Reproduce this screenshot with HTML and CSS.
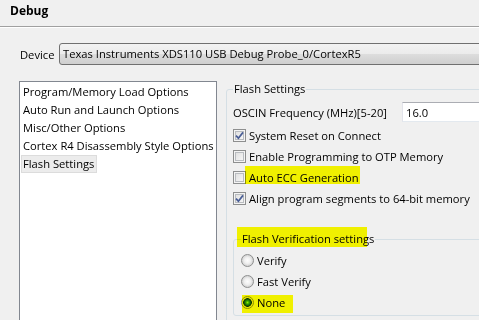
FILE: index.html
```html
<!DOCTYPE html>
<html lang="en">
<head>
    <meta charset="UTF-8">
    <title>Debug</title>
    <link rel="stylesheet" href="styles.css">
</head>
<body>

<div class="header">Debug</div>

<div class="device-row">
    <span class="device-label">Device</span>
    <div class="combo">Texas Instruments XDS110 USB Debug Probe_0/CortexR5</div>
</div>

<div class="main">
    <ul class="nav-list">
        <li><span>Program/Memory Load Options</span></li>
        <li><span>Auto Run and Launch Options</span></li>
        <li><span>Misc/Other Options</span></li>
        <li><span>Cortex R4 Disassembly Style Options</span></li>
        <li class="selected"><span>Flash Settings</span></li>
    </ul>

    <fieldset class="group group-flash">
        <legend>Flash Settings</legend>

        <div class="field-row">
            <label class="field-label">OSCIN Frequency (MHz)[5-20]</label>
            <input class="text-input" type="text" value="16.0" readonly>
        </div>

        <div class="check-row first">
            <span class="cb checked"><svg width="9" height="9" viewBox="0 0 9 9"><path d="M1 4.6 L3.4 7.2 L8 1.4" fill="none" stroke="#4a5e96" stroke-width="1.7"/></svg></span>
            <span>System Reset on Connect</span>
        </div>
        <div class="check-row">
            <span class="cb"></span>
            <span>Enable Programming to OTP Memory</span>
        </div>
        <div class="check-row">
            <span class="cb"></span>
            <span>Auto ECC Generation</span>
            <span class="mark mark-ecc"></span>
        </div>
        <div class="check-row">
            <span class="cb checked"><svg width="9" height="9" viewBox="0 0 9 9"><path d="M1 4.6 L3.4 7.2 L8 1.4" fill="none" stroke="#4a5e96" stroke-width="1.7"/></svg></span>
            <span>Align program segments to 64-bit memory</span>
        </div>

        <fieldset class="group group-verify">
            <legend>Flash Verification settings<span class="mark mark-legend"></span></legend>
            <div class="radio-row">
                <span class="rb"></span>
                <span>Verify</span>
            </div>
            <div class="radio-row">
                <span class="rb"></span>
                <span>Fast Verify</span>
            </div>
            <div class="radio-row">
                <span class="rb checked"></span>
                <span>None</span>
                <span class="mark mark-none"></span>
            </div>
        </fieldset>
    </fieldset>
</div>

</body>
</html>
```

FILE: styles.css
```css
* {margin:0;padding:0;box-sizing:border-box;}
html,body {width:100%;height:100%;overflow:hidden;}
body {
    background: #f0f0f0;
    font-family: "Open Sans", "Liberation Sans", sans-serif;
    font-size: 11.2px;
    color: #000;
}

.header {
    height: 27px;
    line-height: 22px;
    padding-left: 10px;
    font-size: 12px;
    font-weight: 700;
    border-bottom: 1px solid #a0a0a0;
    box-shadow: 0 1px 0 #fff;
}

.device-row {
    display: flex;
    align-items: center;
    height: 22px;
    margin-top: 16px;
    padding-left: 20px;
    overflow: hidden;
}
.device-label {
    width: 39px;
    flex-shrink: 0;
}
.combo {
    flex-shrink: 0;
    width: 440px;
    height: 22px;
    padding-left: 3px;
    line-height: 20px;
    white-space: nowrap;
    border: 1px solid #707070;
    border-radius: 3px;
    background: linear-gradient(#f2f2f2, #ebebeb 50%, #dddddd 50%, #cfcfcf);
}

.main {
    display: flex;
    align-items: flex-start;
    height: 239px;
    margin-top: 16px;
    padding-left: 19px;
    overflow: hidden;
}

/* left list */
.nav-list {
    list-style: none;
    flex-shrink: 0;
    width: 198px;
    height: 260px;
    padding-top: 1px;
    background: #fff;
    border: 1px solid #828790;
}
.nav-list li {
    height: 18px;
    line-height: 18px;
    padding-left: 1px;
    white-space: nowrap;
}
.nav-list li span {
    display: inline-block;
    padding: 0 3px 0 2px;
}
.nav-list .selected span {
    background: #ececec;
    box-shadow: inset 0 0 0 1px #dcdcdc;
}

/* group boxes */
.group {
    border: 1px solid #d5dfe5;
    border-radius: 3px;
    min-width: 0;
}
.group legend {
    position: relative;
    padding: 0 1px;
    line-height: 16px;
}
.group-flash {
    flex-shrink: 0;
    width: 290px;
    margin-left: 9px;
    padding: 0 0 40px 6px;
}
.group-verify {
    margin-top: 22px;
    margin-right: -20px;
    padding: 3px 0 2px 7px;
}

.field-row {
    display: flex;
    align-items: center;
    height: 22px;
    margin-top: 4px;
}
.field-label {
    width: 169px;
    flex-shrink: 0;
    white-space: nowrap;
}
.text-input {
    width: 100px;
    height: 20px;
    padding-left: 3px;
    font: inherit;
    color: #000;
    background: #fff;
    border: 1px solid;
    border-color: #abadb3 #dbdfe6 #e3e9ef #e2e3ea;
    outline: none;
}

.check-row,
.radio-row {
    position: relative;
    display: flex;
    align-items: center;
    height: 21px;
    white-space: nowrap;
}
.check-row.first {
    margin-top: 2px;
}

.cb {
    display: flex;
    align-items: center;
    justify-content: center;
    width: 13px;
    height: 13px;
    margin-right: 3px;
    border: 1px solid #8e8f8f;
    background: linear-gradient(135deg, #dcdcdc, #fbfbfb);
    box-shadow: inset 0 0 0 1px #f4f4f4, inset 0 0 0 2px #b9bcc0;
}

.rb {
    width: 13px;
    height: 13px;
    margin-right: 3px;
    border-radius: 50%;
    border: 1px solid #8e8f8f;
    background: radial-gradient(circle at 50% 50%, #fdfdfd, #f0f0f0 3px, #cfcfcf 6px);
}
.rb.checked {
    background: radial-gradient(circle at 50% 50%, #8cf04c 0, #3aa012 1.6px, #17620a 3px, #0c2f05 4px, #e4e4e4 4.6px, #f6f6f6 6px);
}

/* marker highlights drawn over the screenshot */
.mark {
    position: absolute;
    background: #ffff00;
    mix-blend-mode: multiply;
    pointer-events: none;
}
.mark-ecc {
    left: 12px;
    top: -1px;
    width: 115px;
    height: 18px;
}
.mark-legend {
    left: -4px;
    top: -4px;
    width: 130px;
    height: 20px;
}
.mark-none {
    left: 1px;
    top: 3px;
    width: 51px;
    height: 18px;
}
```
